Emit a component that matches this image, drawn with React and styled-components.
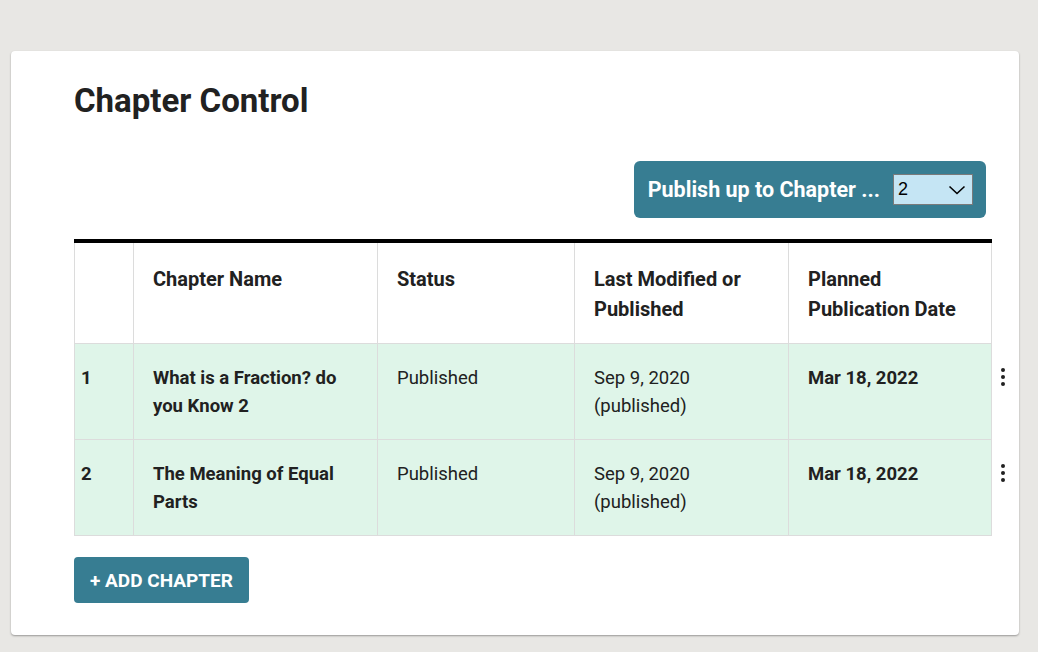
import React from "react";
import styled, { createGlobalStyle } from "styled-components";

const Global = createGlobalStyle`
  html, body { margin: 0; padding: 0; background: #e8e7e4; }
  body { font-family: Roboto, "Noto Sans", Arial, sans-serif; color: #212121; }
  * { box-sizing: border-box; }
`;

const Page = styled.div`
  padding: 51px 19px 16px 11px;
`;

const Card = styled.section`
  background: #fff;
  border-radius: 4px;
  box-shadow: 0 1px 2px rgba(0,0,0,0.35);
  padding: 30px 27px 32px 63px;
`;

const Title = styled.h1`
  margin: 0;
  font-size: 33px;
  line-height: 40px;
  font-weight: 700;
  color: #212121;
`;

const Toolbar = styled.div`
  display: flex;
  justify-content: flex-end;
  margin-top: 40px;
  padding-right: 6px;
`;

const PublishBox = styled.div`
  display: flex;
  align-items: center;
  gap: 13px;
  height: 57px;
  padding: 0 13px 0 14px;
  background: #377d92;
  border-radius: 6px;
  color: #fff;
  font-size: 21.5px;
  font-weight: 700;
`;

const Select = styled.div`
  width: 80px;
  height: 31px;
  background: #c5e5f4;
  border: 1px solid #7a7a7a;
  color: #000;
  font-size: 18px;
  font-weight: 400;
  font-family: "Liberation Sans", Arial, sans-serif;
  display: flex;
  align-items: center;
  justify-content: space-between;
  padding: 0 6px 0 4px;
`;

const TableWrap = styled.div`
  margin-top: 21px;
`;

const Table = styled.table`
  border-collapse: collapse;
  width: 100%;
  table-layout: fixed;
`;

const Th = styled.th`
  width: ${(p) => p.$w}px;
  text-align: left;
  vertical-align: top;
  font-size: 20px;
  line-height: 30px;
  font-weight: 700;
  padding: 21px 20px 19px 19px;
  border: 1px solid #dcdcdc;
  border-top: 4px solid #000;
  height: 101px;
`;

const Row = styled.tr`
  background: #dff5e9;
`;

const Td = styled.td`
  vertical-align: top;
  font-size: 18.5px;
  line-height: 28px;
  font-weight: ${(p) => (p.$bold ? 700 : 400)};
  padding: ${(p) => (p.$index ? "20px 6px 19px 6px" : "20px 20px 19px 19px")};
  border: 1px solid #dcdcdc;
  height: 96px;
`;

const ActionCell = styled.td`
  width: 21px;
  background: #fff;
  vertical-align: top;
  padding: 24px 0 0 9px;
  border: none;
`;

const ActionHead = styled.th`
  width: 21px;
  background: #fff;
  border: none;
`;

const Kebab = styled.div`
  display: flex;
  flex-direction: column;
  gap: 3px;
  & > span {
    width: 4px;
    height: 4px;
    border-radius: 50%;
    background: #212121;
  }
`;

const AddButton = styled.button`
  margin-top: 21px;
  height: 46px;
  padding: 0 16px;
  background: #377d92;
  color: #fff;
  border: none;
  border-radius: 4px;
  font-family: Roboto, Arial, sans-serif;
  font-size: 19px;
  font-weight: 700;
  text-transform: uppercase;
`;

const rows = [
  { n: 1, name: "What is a Fraction? do you Know 2" },
  { n: 2, name: "The Meaning of Equal Parts" },
];

export default function App() {
  return (
    <>
      <Global />
      <Page>
        <Card>
          <Title>Chapter Control</Title>
          <Toolbar>
            <PublishBox>
              <span>Publish up to Chapter ...</span>
              <Select>
                <span>2</span>
                <svg width="18" height="10" viewBox="0 0 18 10">
                  <path d="M1.5 1.5 L9 8.5 L16.5 1.5" fill="none" stroke="#000" strokeWidth="1.6" />
                </svg>
              </Select>
            </PublishBox>
          </Toolbar>
          <TableWrap>
            <Table>
              <thead>
                <tr>
                  <Th $w={59}></Th>
                  <Th $w={244}>Chapter Name</Th>
                  <Th $w={197}>Status</Th>
                  <Th $w={214}>Last Modified or Published</Th>
                  <Th $w={203}>Planned Publication Date</Th>
                  <ActionHead />
                </tr>
              </thead>
              <tbody>
                {rows.map((r) => (
                  <Row key={r.n}>
                    <Td $index $bold>{r.n}</Td>
                    <Td $bold>{r.name}</Td>
                    <Td>Published</Td>
                    <Td>Sep 9, 2020<br />(published)</Td>
                    <Td $bold>Mar 18, 2022</Td>
                    <ActionCell>
                      <Kebab><span /><span /><span /></Kebab>
                    </ActionCell>
                  </Row>
                ))}
              </tbody>
            </Table>
          </TableWrap>
          <AddButton>+ Add Chapter</AddButton>
        </Card>
      </Page>
    </>
  );
}
